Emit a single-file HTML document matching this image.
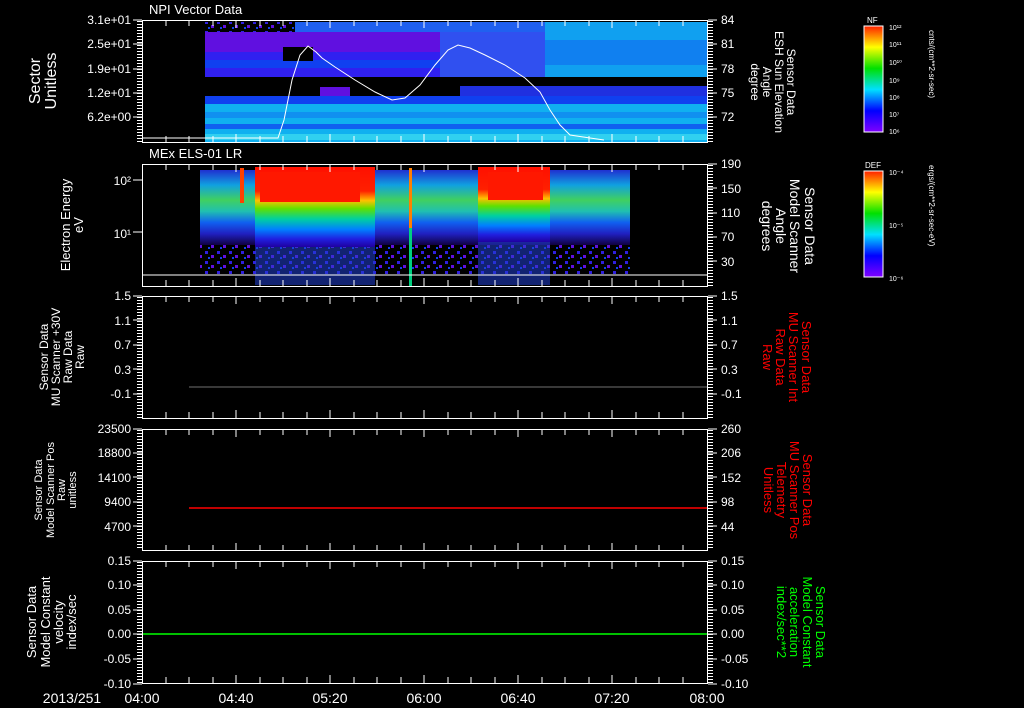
<!DOCTYPE html>
<html><head><style>
html,body{margin:0;padding:0;background:#000;}
svg{display:block;font-family:"Liberation Sans","DejaVu Sans",sans-serif;}
</style></head><body>
<svg width="1024" height="708" viewBox="0 0 1024 708" xmlns="http://www.w3.org/2000/svg">
<defs>
<linearGradient id="nf" x1="0" y1="1" x2="0" y2="0">
<stop offset="0" stop-color="#8000ff"/><stop offset="0.2" stop-color="#0000ff"/><stop offset="0.4" stop-color="#00e0ff"/><stop offset="0.6" stop-color="#00e000"/><stop offset="0.8" stop-color="#ffff00"/><stop offset="1" stop-color="#ff2000"/>
</linearGradient>
<linearGradient id="sp1" x1="0" y1="0" x2="0" y2="1">
<stop offset="0" stop-color="#ff1000"/><stop offset="0.3" stop-color="#ff2000"/><stop offset="0.42" stop-color="#ffc000"/><stop offset="0.52" stop-color="#60e000"/><stop offset="0.65" stop-color="#00d0a0"/><stop offset="0.78" stop-color="#0080ff"/><stop offset="0.9" stop-color="#2020e0"/><stop offset="1" stop-color="#2000a0"/>
</linearGradient>
<linearGradient id="sp0" x1="0" y1="0" x2="0" y2="1">
<stop offset="0" stop-color="#2030d0"/><stop offset="0.2" stop-color="#10a0e0"/><stop offset="0.4" stop-color="#40d060"/><stop offset="0.55" stop-color="#20c0b0"/><stop offset="0.7" stop-color="#1060f0"/><stop offset="0.85" stop-color="#2020c0"/><stop offset="1" stop-color="#100040"/>
</linearGradient>
<pattern id="noise" width="12" height="10" patternUnits="userSpaceOnUse">
<rect x="1" y="1" width="3" height="3" fill="#3020e0"/><rect x="7" y="5" width="3" height="3" fill="#6010e0"/><rect x="4" y="7" width="2" height="2" fill="#1040f0"/>
</pattern>
</defs>

<!-- Panel 1 data -->
<rect x="205" y="22" width="90" height="10" fill="url(#noise)"/>
<rect x="205" y="32" width="340" height="45" fill="#6010e0"/>
<rect x="205" y="52" width="340" height="25" fill="#3020f0"/>
<rect x="205" y="60" width="340" height="8" fill="#1040f0"/>
<rect x="545" y="22" width="162" height="55" fill="#10a0f0"/>
<rect x="545" y="40" width="162" height="25" fill="#1080f0"/>
<rect x="295" y="22" width="250" height="10" fill="#2060f0"/>
<rect x="440" y="32" width="105" height="45" fill="#3050f0"/>
<rect x="205" y="96" width="502" height="46" fill="#10b0f0"/>
<rect x="205" y="96" width="502" height="8" fill="#1040f0"/>
<rect x="205" y="112" width="502" height="6" fill="#1090f0"/>
<rect x="205" y="124" width="502" height="5" fill="#1060f0"/>
<rect x="205" y="134" width="502" height="6" fill="#30d0f0"/>
<rect x="320" y="87" width="30" height="9" fill="#6010e0"/>
<rect x="460" y="86" width="247" height="10" fill="#2030e0"/>
<rect x="283" y="47" width="30" height="14" fill="#000"/>
<polyline fill="none" stroke="#fff" stroke-width="1" points="142,138 278,138 284,120 292,80 300,55 308,46 316,52 322,58 335,67 355,80 375,92 392,100 405,98 420,85 435,65 448,50 458,45 470,48 485,55 505,65 525,78 540,92 550,110 560,125 570,135 590,138 604,140"/>

<!-- Panel 2 data -->
<rect x="200" y="170" width="430" height="75" fill="url(#sp0)"/>
<rect x="200" y="245" width="430" height="30" fill="url(#noise)"/>
<rect x="255" y="167" width="120" height="80" fill="url(#sp1)"/>
<rect x="260" y="172" width="100" height="30" fill="#ff1800"/>
<rect x="478" y="167" width="72" height="75" fill="url(#sp1)"/>
<rect x="488" y="172" width="55" height="28" fill="#ff1800"/>
<rect x="240" y="168" width="4" height="35" fill="#ff4000"/>
<rect x="255" y="247" width="120" height="38" fill="#2040d0" opacity="0.55"/>
<rect x="478" y="242" width="72" height="43" fill="#2040d0" opacity="0.55"/>
<rect x="409" y="168" width="3" height="118" fill="#00d080"/>
<rect x="409" y="168" width="3" height="60" fill="#ff8000"/>
<line x1="142" y1="275" x2="707" y2="275" stroke="#fff"/>

<!-- Panel 3/4/5 lines -->
<line x1="189" y1="387" x2="707" y2="387" stroke="#707070"/>
<line x1="189" y1="508" x2="707" y2="508" stroke="#ff0000" stroke-width="1.5"/>
<line x1="142" y1="634" x2="707" y2="634" stroke="#00ff00" stroke-width="1.5"/>

<!-- Frames -->
<g fill="none" stroke="#fff" stroke-width="1">
<rect x="142.5" y="20.5" width="565" height="122"/>
<rect x="142.5" y="164.5" width="565" height="122"/>
<rect x="142.5" y="296.5" width="565" height="122"/>
<rect x="142.5" y="429.5" width="565" height="121"/>
<rect x="142.5" y="561.5" width="565" height="122"/>
</g>
<g stroke="#fff" stroke-width="1" id="tk">
<path d="M166,20v6M189,20v6M213,20v6M236,20v8M260,20v6M283,20v6M307,20v6M330,20v8M354,20v6M377,20v6M401,20v6M424,20v8M448,20v6M471,20v6M495,20v6M518,20v8M542,20v6M565,20v6M589,20v6M612,20v8M636,20v6M659,20v6M683,20v6
M166,142v-6M189,142v-6M213,142v-6M236,142v-8M260,142v-6M283,142v-6M307,142v-6M330,142v-8M354,142v-6M377,142v-6M401,142v-6M424,142v-8M448,142v-6M471,142v-6M495,142v-6M518,142v-8M542,142v-6M565,142v-6M589,142v-6M612,142v-8M636,142v-6M659,142v-6M683,142v-6"/>
<path transform="translate(0,144)" d="M166,20v6M189,20v6M213,20v6M236,20v8M260,20v6M283,20v6M307,20v6M330,20v8M354,20v6M377,20v6M401,20v6M424,20v8M448,20v6M471,20v6M495,20v6M518,20v8M542,20v6M565,20v6M589,20v6M612,20v8M636,20v6M659,20v6M683,20v6
M166,142v-6M189,142v-6M213,142v-6M236,142v-8M260,142v-6M283,142v-6M307,142v-6M330,142v-8M354,142v-6M377,142v-6M401,142v-6M424,142v-8M448,142v-6M471,142v-6M495,142v-6M518,142v-8M542,142v-6M565,142v-6M589,142v-6M612,142v-8M636,142v-6M659,142v-6M683,142v-6"/>
<path transform="translate(0,276)" d="M166,20v6M189,20v6M213,20v6M236,20v8M260,20v6M283,20v6M307,20v6M330,20v8M354,20v6M377,20v6M401,20v6M424,20v8M448,20v6M471,20v6M495,20v6M518,20v8M542,20v6M565,20v6M589,20v6M612,20v8M636,20v6M659,20v6M683,20v6
M166,142v-6M189,142v-6M213,142v-6M236,142v-8M260,142v-6M283,142v-6M307,142v-6M330,142v-8M354,142v-6M377,142v-6M401,142v-6M424,142v-8M448,142v-6M471,142v-6M495,142v-6M518,142v-8M542,142v-6M565,142v-6M589,142v-6M612,142v-8M636,142v-6M659,142v-6M683,142v-6"/>
<path transform="translate(0,409)" d="M166,20v6M189,20v6M213,20v6M236,20v8M260,20v6M283,20v6M307,20v6M330,20v8M354,20v6M377,20v6M401,20v6M424,20v8M448,20v6M471,20v6M495,20v6M518,20v8M542,20v6M565,20v6M589,20v6M612,20v8M636,20v6M659,20v6M683,20v6
M166,142v-6M189,142v-6M213,142v-6M236,142v-8M260,142v-6M283,142v-6M307,142v-6M330,142v-8M354,142v-6M377,142v-6M401,142v-6M424,142v-8M448,142v-6M471,142v-6M495,142v-6M518,142v-8M542,142v-6M565,142v-6M589,142v-6M612,142v-8M636,142v-6M659,142v-6M683,142v-6"/>
<path transform="translate(0,541)" d="M166,20v6M189,20v6M213,20v6M236,20v8M260,20v6M283,20v6M307,20v6M330,20v8M354,20v6M377,20v6M401,20v6M424,20v8M448,20v6M471,20v6M495,20v6M518,20v8M542,20v6M565,20v6M589,20v6M612,20v8M636,20v6M659,20v6M683,20v6
M166,142v-6M189,142v-6M213,142v-6M236,142v-8M260,142v-6M283,142v-6M307,142v-6M330,142v-8M354,142v-6M377,142v-6M401,142v-6M424,142v-8M448,142v-6M471,142v-6M495,142v-6M518,142v-8M542,142v-6M565,142v-6M589,142v-6M612,142v-8M636,142v-6M659,142v-6M683,142v-6"/>
</g>
<g stroke="#fff" stroke-width="5" stroke-dasharray="1 2" fill="none">
<path d="M139.5,21V142M710.5,21V142M710.5,165V287M139.5,297V418M710.5,297V418M139.5,430V550M710.5,430V550M139.5,562V684M710.5,562V684"/>
</g>
<g stroke="#fff" stroke-width="1">
<path d="M133,20h9M133,44h9M133,69h9M133,93h9M133,117h9M708,20h9M708,44h9M708,69h9M708,93h9M708,117h9
M133,180h9M133,232h9M708,164h9M708,188h9M708,213h9M708,237h9M708,261h9
M133,296h9M133,320h9M133,345h9M133,369h9M133,394h9M708,296h9M708,320h9M708,345h9M708,369h9M708,394h9
M133,429h9M133,453h9M133,477h9M133,502h9M133,526h9M708,429h9M708,453h9M708,477h9M708,502h9M708,526h9
M133,561h9M133,585h9M133,610h9M133,634h9M133,659h9M133,684h9M708,561h9M708,585h9M708,610h9M708,634h9M708,659h9M708,684h9"/>
</g>

<g fill="#fff" font-size="13">
<text x="149" y="14">NPI Vector Data</text>
<text x="149" y="158">MEx ELS-01 LR</text>
<g text-anchor="end" font-size="12">
<text x="131" y="24">3.1e+01</text><text x="131" y="48">2.5e+01</text><text x="131" y="73">1.9e+01</text><text x="131" y="97">1.2e+01</text><text x="131" y="121">6.2e+00</text>
<text x="131" y="185">10²</text><text x="131" y="238">10¹</text>
<text x="131" y="300">1.5</text><text x="131" y="325">1.1</text><text x="131" y="349">0.7</text><text x="131" y="374">0.3</text><text x="131" y="398">-0.1</text>
<text x="131" y="433">23500</text><text x="131" y="457">18800</text><text x="131" y="482">14100</text><text x="131" y="506">9400</text><text x="131" y="531">4700</text>
<text x="131" y="565">0.15</text><text x="131" y="589">0.10</text><text x="131" y="614">0.05</text><text x="131" y="638">0.00</text><text x="131" y="663">-0.05</text><text x="131" y="688">-0.10</text>
</g>
<g font-size="12">
<text x="721" y="24">84</text><text x="721" y="48">81</text><text x="721" y="73">78</text><text x="721" y="97">75</text><text x="721" y="121">72</text>
<text x="721" y="168">190</text><text x="721" y="193">150</text><text x="721" y="217">110</text><text x="721" y="241">70</text><text x="721" y="266">30</text>
<text x="721" y="300">1.5</text><text x="721" y="325">1.1</text><text x="721" y="349">0.7</text><text x="721" y="374">0.3</text><text x="721" y="398">-0.1</text>
<text x="721" y="433">260</text><text x="721" y="457">206</text><text x="721" y="482">152</text><text x="721" y="506">98</text><text x="721" y="531">44</text>
<text x="721" y="565">0.15</text><text x="721" y="589">0.10</text><text x="721" y="614">0.05</text><text x="721" y="638">0.00</text><text x="721" y="663">-0.05</text><text x="721" y="688">-0.10</text>
</g>
<g font-size="14" text-anchor="middle">
<text x="72" y="703">2013/251</text>
<text x="142" y="703">04:00</text><text x="236" y="703">04:40</text><text x="330" y="703">05:20</text><text x="424" y="703">06:00</text><text x="518" y="703">06:40</text><text x="612" y="703">07:20</text><text x="707" y="703">08:00</text>
</g>
<g text-anchor="middle">
<text transform="translate(40,81) rotate(-90)" font-size="16">Sector</text>
<text transform="translate(56,81) rotate(-90)" font-size="16">Unitless</text>
<text transform="translate(70,225) rotate(-90)" font-size="13">Electron Energy</text>
<text transform="translate(83,225) rotate(-90)" font-size="13">eV</text>
<text transform="translate(48,357) rotate(-90)" font-size="12">Sensor Data</text>
<text transform="translate(60,357) rotate(-90)" font-size="12">MU Scanner +30V</text>
<text transform="translate(72,357) rotate(-90)" font-size="12">Raw Data</text>
<text transform="translate(84,357) rotate(-90)" font-size="12">Raw</text>
<text transform="translate(42,490) rotate(-90)" font-size="11">Sensor Data</text>
<text transform="translate(54,490) rotate(-90)" font-size="11">Model Scanner Pos</text>
<text transform="translate(65,490) rotate(-90)" font-size="11">Raw</text>
<text transform="translate(76,490) rotate(-90)" font-size="11">unitless</text>
<text transform="translate(36,622) rotate(-90)" font-size="13">Sensor Data</text>
<text transform="translate(50,622) rotate(-90)" font-size="13">Model Constant</text>
<text transform="translate(63,622) rotate(-90)" font-size="13">velocity</text>
<text transform="translate(76,622) rotate(-90)" font-size="13">index/sec</text>
</g>
<g text-anchor="middle">
<text transform="translate(787,82) rotate(90)" font-size="12">Sensor Data</text>
<text transform="translate(775,82) rotate(90)" font-size="12">ESH Sun Elevation</text>
<text transform="translate(763,82) rotate(90)" font-size="12">Angle</text>
<text transform="translate(751,82) rotate(90)" font-size="12">degree</text>
<text transform="translate(805,226) rotate(90)" font-size="14">Sensor Data</text>
<text transform="translate(790,226) rotate(90)" font-size="14">Model Scanner</text>
<text transform="translate(776,226) rotate(90)" font-size="14">Angle</text>
<text transform="translate(762,226) rotate(90)" font-size="14">degrees</text>
</g>
<g text-anchor="middle" fill="#ff0000">
<text transform="translate(802,357) rotate(90)" font-size="13">Sensor Data</text>
<text transform="translate(789,357) rotate(90)" font-size="13">MU Scanner Int</text>
<text transform="translate(776,357) rotate(90)" font-size="13">Raw Data</text>
<text transform="translate(763,357) rotate(90)" font-size="13">Raw</text>
<text transform="translate(803,490) rotate(90)" font-size="13">Sensor Data</text>
<text transform="translate(790,490) rotate(90)" font-size="13">MU Scanner Pos</text>
<text transform="translate(777,490) rotate(90)" font-size="13">Telemetry</text>
<text transform="translate(764,490) rotate(90)" font-size="13">Unitless</text>
</g>
<g text-anchor="middle" fill="#00ff00">
<text transform="translate(816,622) rotate(90)" font-size="13">Sensor Data</text>
<text transform="translate(803,622) rotate(90)" font-size="13">Model Constant</text>
<text transform="translate(790,622) rotate(90)" font-size="13">acceleration</text>
<text transform="translate(777,622) rotate(90)" font-size="13">index/sec**2</text>
</g>
<rect x="864" y="26" width="19" height="106" fill="url(#nf)" stroke="#fff"/>
<rect x="864" y="171" width="19" height="106" fill="url(#nf)" stroke="#fff"/>
<text x="867" y="23" font-size="8">NF</text>
<text x="865" y="168" font-size="8">DEF</text>
<g font-size="7">
<text x="889" y="30">10¹²</text><text x="889" y="47">10¹¹</text><text x="889" y="65">10¹⁰</text><text x="889" y="83">10⁹</text><text x="889" y="100">10⁸</text><text x="889" y="117">10⁷</text><text x="889" y="134">10⁶</text>
<text x="889" y="175">10⁻⁴</text><text x="889" y="228">10⁻⁵</text><text x="889" y="281">10⁻⁶</text>
</g>
<text transform="translate(929,30) rotate(90)" font-size="8">cnts/(cm**2-sr-sec)</text>
<text transform="translate(929,165) rotate(90)" font-size="8">ergs/(cm**2-sr-sec-eV)</text>
</g>
</svg>
</body></html>
